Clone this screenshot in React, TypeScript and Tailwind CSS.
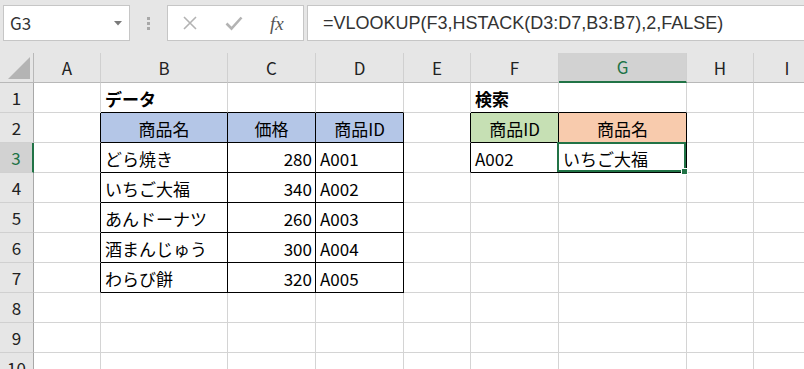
import React from 'react';

const colWidths = ['w-[67px]', 'w-[127px]', 'w-[88px]', 'w-[88px]', 'w-[67px]', 'w-[88px]', 'w-[128px]', 'w-[67px]', 'w-[67px]'];
const colNames = ['A', 'B', 'C', 'D', 'E', 'F', 'G', 'H', 'I'];
const rowCount = 10;

type Cell = { text: string; align?: 'left' | 'center' | 'right'; bold?: boolean; bg?: string };

// cell contents, keyed by "row,col" (col 0 = A)
const cells: Record<string, Cell> = {
	'1,1': { text: 'データ', bold: true },
	'2,1': { text: '商品名', align: 'center', bg: 'bg-[#b4c6e7]' },
	'2,2': { text: '価格', align: 'center', bg: 'bg-[#b4c6e7]' },
	'2,3': { text: '商品ID', align: 'center', bg: 'bg-[#b4c6e7]' },
	'3,1': { text: 'どら焼き' },
	'3,2': { text: '280', align: 'right' },
	'3,3': { text: 'A001' },
	'4,1': { text: 'いちご大福' },
	'4,2': { text: '340', align: 'right' },
	'4,3': { text: 'A002' },
	'5,1': { text: 'あんドーナツ' },
	'5,2': { text: '260', align: 'right' },
	'5,3': { text: 'A003' },
	'6,1': { text: '酒まんじゅう' },
	'6,2': { text: '300', align: 'right' },
	'6,3': { text: 'A004' },
	'7,1': { text: 'わらび餅' },
	'7,2': { text: '320', align: 'right' },
	'7,3': { text: 'A005' },
	'1,5': { text: '検索', bold: true },
	'2,5': { text: '商品ID', align: 'center', bg: 'bg-[#c6e0b4]' },
	'2,6': { text: '商品名', align: 'center', bg: 'bg-[#f8cbad]' },
	'3,5': { text: 'A002' },
	'3,6': { text: 'いちご大福' },
};

const inTable = (r: number, c: number): boolean =>
	(r >= 2 && r <= 7 && c >= 1 && c <= 3) || (r >= 2 && r <= 3 && c >= 5 && c <= 6);

const Toolbar = () => (
	<div className="h-[53px] flex items-start pt-[5px] pl-[3px]">
		{/* Name box */}
		<div className="w-[127px] h-[36px] shrink-0 bg-white border border-[#c6c6c6] flex items-center justify-between pl-[6px] pr-[7px]">
			<span className="text-[17px] text-[#333]">G3</span>
			<svg width="8" height="5" viewBox="0 0 8 5">
				<path d="M0 0 L8 0 L4 4.5 Z" fill="#7a7a7a" />
			</svg>
		</div>

		{/* Grip dots */}
		<div className="w-[37px] h-[36px] shrink-0 flex flex-col items-center justify-center gap-[2px]">
			<div className="w-[3px] h-[3px] bg-[#a8a8a8]" />
			<div className="w-[3px] h-[3px] bg-[#a8a8a8]" />
			<div className="w-[3px] h-[3px] bg-[#a8a8a8]" />
		</div>

		{/* Cancel / Enter / fx */}
		<div className="w-[137px] h-[36px] shrink-0 bg-white border border-[#c6c6c6] flex items-center pl-[14px]">
			<svg width="16" height="16" viewBox="0 0 16 16">
				<path d="M2 2 L14 14 M14 2 L2 14" stroke="#b3b3b3" strokeWidth="1.6" />
			</svg>
			<svg width="18" height="16" viewBox="0 0 18 16" className="ml-[27px]">
				<path d="M1.5 8.5 L6.5 13.5 L16.5 2.5" stroke="#b3b3b3" strokeWidth="2.6" fill="none" />
			</svg>
			<span className="ml-[27px] text-[19px] italic text-[#555] font-['Liberation_Serif',serif] leading-none">fx</span>
		</div>

		{/* Formula bar */}
		<div className="ml-[3px] w-[520px] h-[36px] shrink-0 bg-white border border-[#c6c6c6] flex items-center pl-[15px]">
			<span className="text-[18px] text-[#333] whitespace-nowrap font-['Liberation_Sans',Arial,sans-serif]">
				=VLOOKUP(F3,HSTACK(D3:D7,B3:B7),2,FALSE)
			</span>
		</div>
	</div>
);

const App = () => {
	const rows = Array.from({ length: rowCount }, (_, i) => i + 1);

	return (
		<div className="w-[804px] h-[369px] overflow-hidden bg-[#e6e6e6] font-['Noto_Sans_CJK_JP','Noto_Sans',sans-serif] text-black">
			<Toolbar />

			{/* Column header row */}
			<div className="flex h-[30px]">
				<div className="w-[34px] shrink-0 h-full border-r border-b border-r-[#b8b8b8] border-b-[#b8b8b8] flex items-end justify-end pr-[3px] pb-[3px]">
					<svg width="22" height="22" viewBox="0 0 22 22">
						<path d="M22 0 L22 22 L0 22 Z" fill="#b4b4b4" />
					</svg>
				</div>
				{colNames.map((name, c) => (
					<div
						key={name}
						className={`${colWidths[c]} shrink-0 h-full border-r border-r-[#d0d0d0] flex items-center justify-center text-[17px] ${
							c === 6
								? 'bg-[#d2d2d2] border-b-2 border-b-[#217346] text-[#217346]'
								: 'border-b border-b-[#b8b8b8] text-[#222]'
						}`}
					>
						{name}
					</div>
				))}
			</div>

			{/* Sheet rows */}
			{rows.map((r) => (
				<div key={r} className="flex h-[30px]">
					<div
						className={`w-[34px] shrink-0 h-full border-b border-b-[#d0d0d0] flex items-center justify-center text-[17px] ${
							r === 3
								? 'bg-[#d2d2d2] border-r-2 border-r-[#217346] text-[#217346]'
								: 'border-r border-r-[#a8a8a8] text-[#222]'
						}`}
					>
						{r}
					</div>
					{colNames.map((name, c) => {
						const cell = cells[`${r},${c}`];
						const rightBlack = inTable(r, c) || inTable(r, c + 1);
						const bottomBlack = inTable(r, c) || inTable(r + 1, c);
						const selected = r === 3 && c === 6;
						return (
							<div
								key={name}
								className={`relative ${colWidths[c]} shrink-0 h-full border-r border-b flex items-center pt-[2px] text-[17px] whitespace-nowrap ${
									rightBlack ? 'border-r-black' : 'border-r-[#d4d4d4]'
								} ${bottomBlack ? 'border-b-black' : 'border-b-[#d4d4d4]'} ${cell?.bg ?? 'bg-white'} ${
									cell?.align === 'center'
										? 'justify-center'
										: cell?.align === 'right'
											? 'justify-end pr-[3px]'
											: 'justify-start pl-[4px]'
								} ${cell?.bold ? 'font-bold' : ''}`}
							>
								{cell?.text}
								{selected && (
									<>
										<div className="absolute -left-[2px] -top-[1px] right-0 bottom-0 border-2 border-[#217346] z-10" />
										<div className="absolute -right-[2px] -bottom-[3px] w-[7px] h-[7px] bg-[#217346] border border-white z-20" />
									</>
								)}
							</div>
						);
					})}
				</div>
			))}
		</div>
	);
};

export default App;
